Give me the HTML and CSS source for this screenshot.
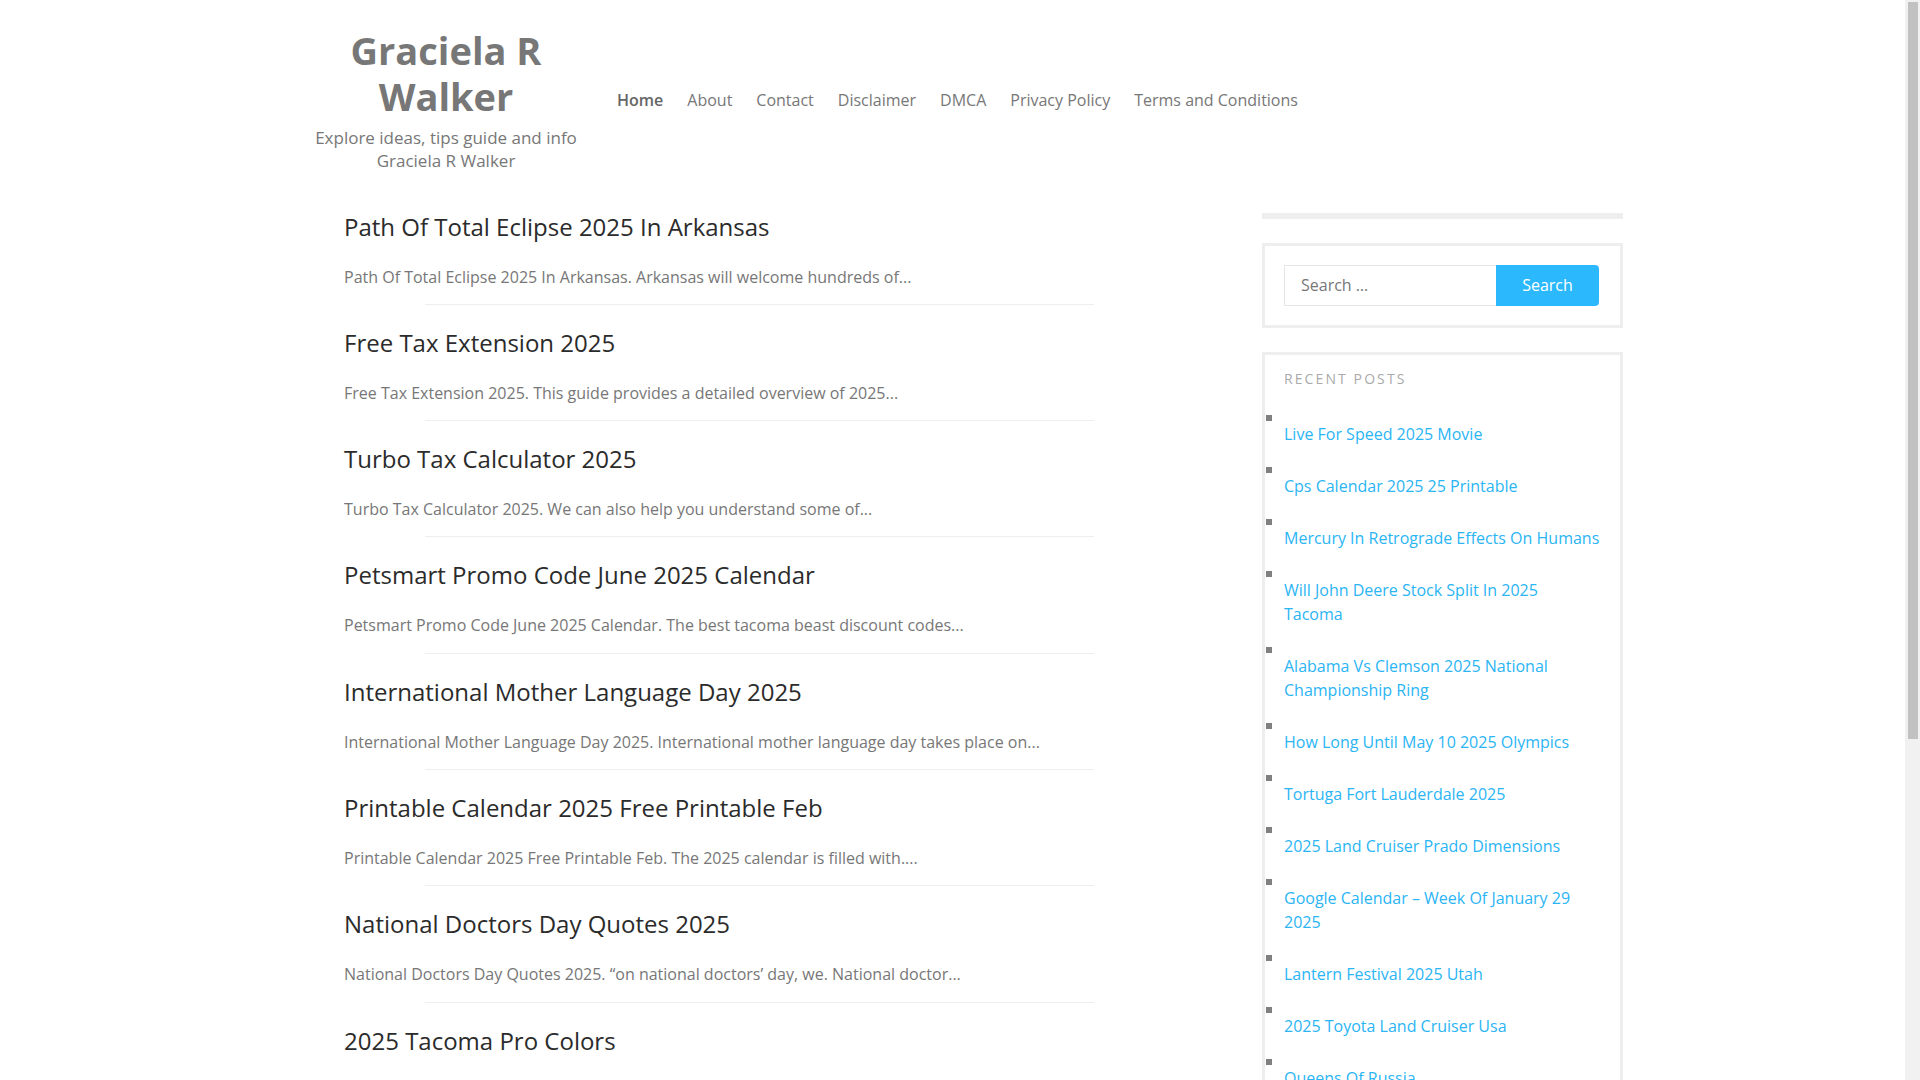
FILE: index.html
```html
<!DOCTYPE html>
<html lang="en">
<head>
<meta charset="utf-8">
<title>Graciela R Walker</title>
<link rel="stylesheet" href="styles.css">
</head>
<body>
<div class="site-area">
<div class="page">
  <header class="site-header">
    <div class="branding">
      <div class="site-title">Graciela R Walker</div>
      <div class="site-desc">Explore ideas, tips guide and info Graciela R Walker</div>
    </div>
    <nav class="main-nav">
      <ul>
        <li><a class="current" href="#">Home</a></li>
        <li><a href="#">About</a></li>
        <li><a href="#">Contact</a></li>
        <li><a href="#">Disclaimer</a></li>
        <li><a href="#">DMCA</a></li>
        <li><a href="#">Privacy Policy</a></li>
        <li><a href="#">Terms and Conditions</a></li>
      </ul>
    </nav>
  </header>

  <div class="content-row">
    <main class="site-main">
      <article class="post">
        <h2 class="post-title">Path Of Total Eclipse 2025 In Arkansas</h2>
        <p class="post-excerpt">Path Of Total Eclipse 2025 In Arkansas. Arkansas will welcome hundreds of...</p>
        <hr class="post-sep">
      </article>
      <article class="post">
        <h2 class="post-title">Free Tax Extension 2025</h2>
        <p class="post-excerpt">Free Tax Extension 2025. This guide provides a detailed overview of 2025...</p>
        <hr class="post-sep">
      </article>
      <article class="post">
        <h2 class="post-title">Turbo Tax Calculator 2025</h2>
        <p class="post-excerpt">Turbo Tax Calculator 2025. We can also help you understand some of...</p>
        <hr class="post-sep">
      </article>
      <article class="post">
        <h2 class="post-title">Petsmart Promo Code June 2025 Calendar</h2>
        <p class="post-excerpt">Petsmart Promo Code June 2025 Calendar. The best tacoma beast discount codes...</p>
        <hr class="post-sep">
      </article>
      <article class="post">
        <h2 class="post-title">International Mother Language Day 2025</h2>
        <p class="post-excerpt">International Mother Language Day 2025. International mother language day takes place on...</p>
        <hr class="post-sep">
      </article>
      <article class="post">
        <h2 class="post-title">Printable Calendar 2025 Free Printable Feb</h2>
        <p class="post-excerpt">Printable Calendar 2025 Free Printable Feb. The 2025 calendar is filled with....</p>
        <hr class="post-sep">
      </article>
      <article class="post">
        <h2 class="post-title">National Doctors Day Quotes 2025</h2>
        <p class="post-excerpt">National Doctors Day Quotes 2025. “on national doctors’ day, we. National doctor...</p>
        <hr class="post-sep">
      </article>
      <article class="post">
        <h2 class="post-title">2025 Tacoma Pro Colors</h2>
      </article>
    </main>

    <aside class="sidebar">
      <div class="sidebar-bar"></div>
      <section class="widget search-widget">
        <form class="search-form">
          <input class="search-field" type="search" placeholder="Search …">
          <button class="search-submit" type="button">Search</button>
        </form>
      </section>
      <section class="widget recent-widget">
        <h3 class="widget-title">Recent Posts</h3>
        <ul class="recent-list">
          <li><a href="#">Live For Speed 2025 Movie</a></li>
          <li><a href="#">Cps Calendar 2025 25 Printable</a></li>
          <li><a href="#">Mercury In Retrograde Effects On Humans</a></li>
          <li><a href="#">Will John Deere Stock Split In 2025 Tacoma</a></li>
          <li><a href="#">Alabama Vs Clemson 2025 National Championship Ring</a></li>
          <li><a href="#">How Long Until May 10 2025 Olympics</a></li>
          <li><a href="#">Tortuga Fort Lauderdale 2025</a></li>
          <li><a href="#">2025 Land Cruiser Prado Dimensions</a></li>
          <li><a href="#">Google Calendar – Week Of January 29 2025</a></li>
          <li><a href="#">Lantern Festival 2025 Utah</a></li>
          <li><a href="#">2025 Toyota Land Cruiser Usa</a></li>
          <li><a href="#">Queens Of Russia</a></li>
        </ul>
      </section>
    </aside>
  </div>
</div>
</div>
<div class="fake-scrollbar" aria-hidden="true">
  <div class="fake-thumb"></div>
</div>
</body>
</html>
```

FILE: styles.css
```css
html, body {
  margin: 0;
  padding: 0;
  background: #ffffff;
}

body {
  display: flex;
  align-items: flex-start;
  font-family: "Open Sans", "Noto Sans", "Liberation Sans", sans-serif;
  font-size: 16px;
  color: #777777;
}

a {
  text-decoration: none;
}

.site-area {
  flex: 1;
  min-width: 0;
}

.fake-scrollbar {
  width: 15px;
  height: 1080px;
  flex-shrink: 0;
  background: #f1f1f1;
  box-sizing: border-box;
  padding: 2px 2px 0 3px;
}

.fake-thumb {
  height: 737px;
  background: #c1c1c1;
}

.page {
  width: 1341px;
  margin: 0 auto;
}

/* Header */
.site-header {
  display: flex;
  align-items: center;
  padding-top: 27px;
}

.branding {
  width: 292px;
  margin-left: 18px;
  text-align: center;
}

.site-title {
  font-size: 38px;
  line-height: 46px;
  font-weight: 700;
  color: #777777;
}

.site-desc {
  margin-top: 7px;
  font-size: 17px;
  line-height: 23.3px;
  color: #777777;
}

.main-nav ul {
  display: flex;
  list-style: none;
  margin: 1px 0 0 13px;
  padding: 0;
}

.main-nav a {
  display: block;
  padding: 0 12px;
  font-size: 16px;
  line-height: 24px;
  color: #777777;
}

.main-nav a.current {
  font-weight: 600;
  color: #666666;
}

/* Content */
.content-row {
  display: flex;
  align-items: flex-start;
  margin-top: 38px;
}

.site-main {
  width: 874px;
  box-sizing: border-box;
  padding: 0 62px;
}

.post-title {
  margin: 0 0 22px;
  font-size: 24px;
  line-height: 32px;
  font-weight: 400;
  color: #2b2b2b;
}

.post-excerpt {
  margin: 0 0 15.3px;
  font-size: 16px;
  line-height: 24px;
  color: #777777;
}

.post-sep {
  border: 0;
  border-top: 1px solid #eeeeee;
  height: 0;
  margin: 0 0 22px 81px;
}

/* Sidebar */
.sidebar {
  width: 361px;
  margin-left: auto;
  padding-top: 2px;
}

.sidebar-bar {
  height: 6px;
  background: #eeeeee;
}

.widget {
  border: 3px solid #eeeeee;
  margin-top: 24px;
}

.search-widget {
  padding: 19px 20px 19px 19px;
}

.search-form {
  display: flex;
  margin: 0;
}

.search-field {
  width: 212px;
  height: 41px;
  box-sizing: border-box;
  border: 1px solid #e6e6e6;
  border-right: 0;
  padding: 0 16px;
  font-family: "Open Sans", "Noto Sans", sans-serif;
  font-size: 16px;
  color: #777777;
  background: #ffffff;
  outline: none;
  border-radius: 0;
  -webkit-appearance: none;
}

.search-field::placeholder {
  color: #777777;
}

.search-submit {
  width: 103px;
  height: 41px;
  border: 0;
  border-radius: 0 4px 4px 0;
  background: #2bb8fd;
  color: #ffffff;
  font-family: "Open Sans", "Noto Sans", sans-serif;
  font-size: 16px;
  padding: 0;
}

.recent-widget {
  padding: 14px 20px 10px 19px;
}

.widget-title {
  margin: 0 0 26px;
  font-size: 14px;
  line-height: 20px;
  font-weight: 400;
  letter-spacing: 2.1px;
  text-transform: uppercase;
  color: #aaaaaa;
}

.recent-list {
  list-style: none;
  margin: 0;
  padding: 0;
}

.recent-list li {
  margin-bottom: 21px;
}

.recent-list li::before {
  content: "";
  display: block;
  width: 6px;
  height: 6px;
  margin: 0 0 1px -18px;
  background: #808080;
}

.recent-list a {
  display: block;
  font-size: 16px;
  line-height: 24px;
  color: #2bb5f5;
}
```
